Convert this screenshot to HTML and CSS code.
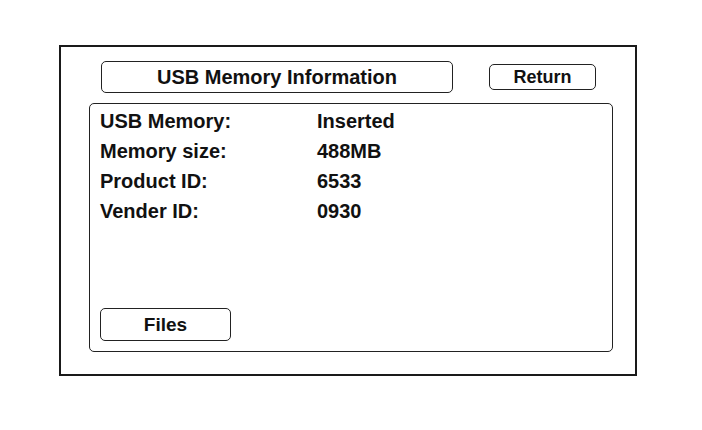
FILE: index.html
```html
<!DOCTYPE html>
<html>
<head>
    <title>USB Memory Information</title>
    <link rel="stylesheet" href="styles.css">
</head>
<body>
    <div class="screen">
        <div class="header">
            <div class="title-box">USB Memory Information</div>
            <button class="return-button">Return</button>
        </div>

        <div class="panel">
            <div class="info-row">
                <span class="info-label">USB Memory:</span>
                <span class="info-value">Inserted</span>
            </div>
            <div class="info-row">
                <span class="info-label">Memory size:</span>
                <span class="info-value">488MB</span>
            </div>
            <div class="info-row">
                <span class="info-label">Product ID:</span>
                <span class="info-value">6533</span>
            </div>
            <div class="info-row">
                <span class="info-label">Vender ID:</span>
                <span class="info-value">0930</span>
            </div>

            <button class="files-button">Files</button>
        </div>
    </div>
</body>
</html>
```

FILE: styles.css
```css
body {
    font-family: "Liberation Sans", Arial, sans-serif;
    font-weight: bold;
    color: #111;
    margin: 0;
    padding: 45px 0 0 59px;
    background-color: #ffffff;
}

.screen {
    box-sizing: border-box;
    width: 578px;
    height: 331px;
    border: 2px solid #1a1a1a;
}

.header {
    display: flex;
    align-items: center;
    padding: 14px 0 0 40px;
}

.title-box {
    box-sizing: border-box;
    width: 352px;
    height: 32px;
    border: 1px solid #222;
    border-radius: 5px;
    font-size: 20px;
    line-height: 30px;
    text-align: center;
}

.return-button,
.files-button {
    box-sizing: border-box;
    padding: 0;
    font-family: inherit;
    font-weight: bold;
    color: #111;
    background-color: #ffffff;
    border: 1px solid #222;
    border-radius: 5px;
}

.return-button {
    margin-left: 36px;
    width: 107px;
    height: 26px;
    font-size: 18px;
    line-height: 24px;
}

.panel {
    box-sizing: border-box;
    display: flex;
    flex-direction: column;
    width: 524px;
    height: 249px;
    margin: 10px 0 0 28px;
    padding: 2px 10px 10px 10px;
    border: 1px solid #222;
    border-radius: 5px;
}

.info-row {
    display: flex;
    font-size: 20px;
    line-height: 30px;
}

.info-label {
    width: 217px;
}

.files-button {
    margin-top: auto;
    width: 131px;
    height: 33px;
    font-size: 19px;
    line-height: 31px;
}
```
